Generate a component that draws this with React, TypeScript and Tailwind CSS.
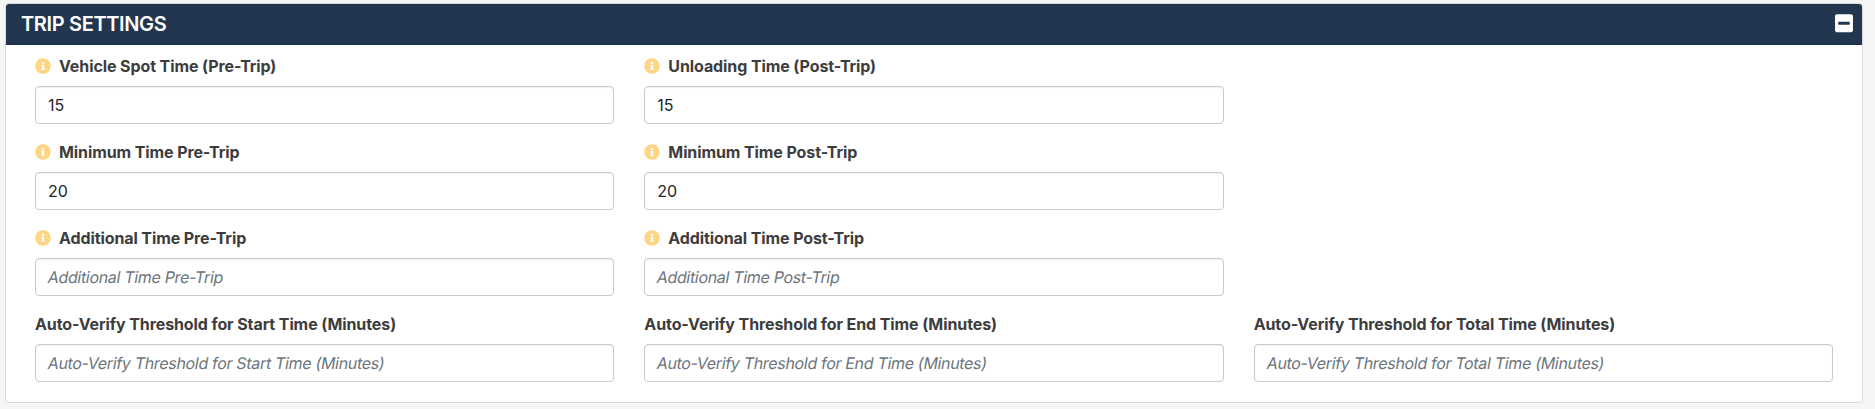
import { useState } from 'react';
import { FaInfoCircle, FaMinusSquare } from 'react-icons/fa';

interface Field {
  label: string;
  value?: string;
  info?: boolean;
}

const rows: Field[][] = [
  [
    { label: 'Vehicle Spot Time (Pre-Trip)', value: '15', info: true },
    { label: 'Unloading Time (Post-Trip)', value: '15', info: true },
  ],
  [
    { label: 'Minimum Time Pre-Trip', value: '20', info: true },
    { label: 'Minimum Time Post-Trip', value: '20', info: true },
  ],
  [
    { label: 'Additional Time Pre-Trip', info: true },
    { label: 'Additional Time Post-Trip', info: true },
  ],
  [
    { label: 'Auto-Verify Threshold for Start Time (Minutes)' },
    { label: 'Auto-Verify Threshold for End Time (Minutes)' },
    { label: 'Auto-Verify Threshold for Total Time (Minutes)' },
  ],
];

function FormField({ label, value = '', info }: Field) {
  const [text, setText] = useState(value);

  return (
    <div className="mb-4">
      <label className="flex h-8 items-start text-[16px] leading-6 font-bold tracking-[-0.1px] text-[#3d3d3d]">
        {info && <FaInfoCircle className="mt-1 mr-2 h-4 w-4 text-[#ffd485]" />}
        {label}
      </label>
      <div className="relative">
        <input
          type="text"
          aria-label={label}
          value={text}
          onChange={(e) => setText(e.target.value)}
          className="block h-[38px] w-full rounded border border-[#c5cbd2] bg-white px-3 text-[16px] tracking-[-0.1px] text-[#212529] shadow-[inset_0_1px_1px_rgba(0,0,0,0.06)] outline-none"
        />
        {/* Slanted roman placeholder, the italic face has different letterforms */}
        {!text && (
          <span className="pointer-events-none absolute top-[7px] left-[13px] -skew-x-[10deg] text-[16px] leading-6 tracking-[-0.32px] whitespace-nowrap text-[#6c757d]">
            {label}
          </span>
        )}
      </div>
    </div>
  );
}

export default function App() {
  return (
    <div className="h-[409px] overflow-hidden bg-[#f5f5f5] pt-[3px] pl-[5px] font-[Inter,sans-serif]">
      <section className="h-[400px] w-[1858px] overflow-hidden rounded border border-[#d9dadb] bg-white">
        <header className="flex h-[41px] items-center justify-between border-b border-[#1a2d48] bg-[#22364f] pr-[9px] pl-[15px]">
          <h2 className="text-[20px] leading-6 font-semibold tracking-[-0.35px] text-white">TRIP SETTINGS</h2>
          <button type="button" aria-label="Collapse" className="mb-px">
            <FaMinusSquare className="h-[20.5px] w-[18px] text-white" />
          </button>
        </header>
        <div className="px-[29px] pt-[9px]">
          {rows.map((fields, i) => (
            <div key={i} className="grid grid-cols-3 gap-x-[30px]">
              {fields.map((field) => (
                <FormField key={field.label} {...field} />
              ))}
            </div>
          ))}
        </div>
      </section>
    </div>
  );
}
